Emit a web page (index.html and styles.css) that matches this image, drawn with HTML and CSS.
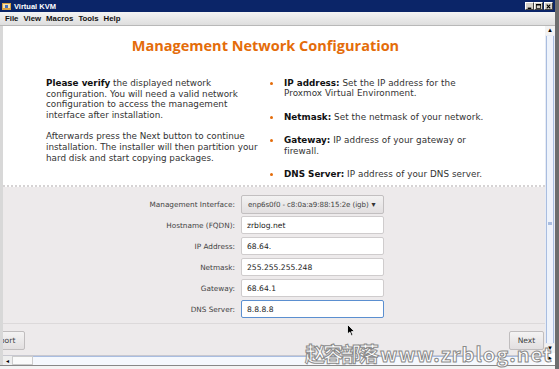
FILE: index.html
```html
<!DOCTYPE html>
<html>
<head>
<meta charset="utf-8">
<link rel="stylesheet" href="styles.css">
</head>
<body>
<div class="win">
  <div class="titlebar">
    <div class="tb-left">
      <svg class="appicon" width="9" height="9" viewBox="0 0 9 9"><rect x="0" y="1" width="9" height="7" fill="#d8a040"/><rect x="1" y="2" width="7" height="4" fill="#f4e2b0"/><rect x="3" y="3" width="3" height="3" fill="#4070c0"/></svg>
      <span class="wtitle">Virtual KVM</span>
    </div>
    <div class="tb-btns">
      <span class="tbtn"><svg width="7" height="7" viewBox="0 0 7 7"><rect x="1" y="5" width="5" height="2" fill="#000"/></svg></span>
      <span class="tbtn"><svg width="7" height="7" viewBox="0 0 7 7"><rect x="0.5" y="0.5" width="6" height="6" fill="none" stroke="#000"/><rect x="0" y="0" width="7" height="2" fill="#000"/></svg></span>
      <span class="tbtn gap"><svg width="7" height="7" viewBox="0 0 7 7"><path d="M1 1 L6 6 M6 1 L1 6" stroke="#000" stroke-width="1.6"/></svg></span>
    </div>
  </div>
  <div class="menubar">
    <span>File</span><span>View</span><span>Macros</span><span>Tools</span><span>Help</span>
  </div>
  <div class="main">
    <div class="viewport">
      <div class="page">
        <div class="top">
          <h1>Management Network Configuration</h1>
          <div class="cols">
            <div class="left">
              <p><b>Please verify</b> the displayed network<br>configuration. You will need a valid network<br>configuration to access the management<br>interface after installation.</p>
              <p>Afterwards press the Next button to continue<br>installation. The installer will then partition your<br>hard disk and start copying packages.</p>
            </div>
            <ul class="right">
              <li><b>IP address:</b> Set the IP address for the Proxmox Virtual Environment.</li>
              <li><b>Netmask:</b> Set the netmask of your network.</li>
              <li><b>Gateway:</b> IP address of your gateway or firewall.</li>
              <li><b>DNS Server:</b> IP address of your DNS server.</li>
            </ul>
          </div>
        </div>
        <div class="form">
          <div class="row"><label>Management Interface:</label><div class="combo">enp6s0f0 - c8:0a:a9:88:15:2e (igb) <span class="caret">&#9662;</span></div></div>
          <div class="row"><label>Hostname (FQDN):</label><div class="field">zrblog.net</div></div>
          <div class="row"><label>IP Address:</label><div class="field">68.64.</div></div>
          <div class="row"><label>Netmask:</label><div class="field">255.255.255.248</div></div>
          <div class="row"><label>Gateway:</label><div class="field">68.64.1</div></div>
          <div class="row"><label>DNS Server:</label><div class="field focus">8.8.8.8</div></div>
        </div>
        <div class="btnbar">
          <div class="btn abort">Abort</div>
          <div class="btn next">Next</div>
        </div>
        <svg class="cursor" width="9" height="13" viewBox="0 0 9 13"><path d="M0.5 0.5 L0.5 10 L2.8 8 L4.5 12 L6 11.3 L4.4 7.6 L7.5 7.6 Z" fill="#000" stroke="#fff" stroke-width="0.8"/></svg>
      </div>
      <div class="hscroll">
        <span class="harrow">&#9666;</span>
        <span class="hthumb"></span>
        <span class="htrack"></span>
      </div>
    </div>
    <div class="vscroll">
      <span class="varrow">&#9652;</span>
      <div class="vtrack"><span class="vgrip"></span></div>
      <span class="varrow down">&#9662;</span>
      <span class="corner">&#9656;</span>
    </div>
  </div>
  <div class="bottomedge"></div>
  <div class="watermark"><span class="wm-cjk">赵容部落</span><span class="wm-lat">www.zrblog.net</span></div>
</div>
</body>
</html>
```
FILE: styles.css
```css
* { box-sizing: border-box; }
html, body { margin: 0; padding: 0; }
body { width: 559px; height: 369px; overflow: hidden; background: #fff; font-family: "DejaVu Sans", sans-serif; }
.win { position: relative; width: 559px; height: 369px; display: flex; flex-direction: column; background: #c8c8c8; border-right: 4px solid #6d6d6d; }
.titlebar { height: 12px; background: #0b2568; display: flex; justify-content: space-between; align-items: center; padding: 0 2px 0 2px; }
.tb-left { display: flex; align-items: center; gap: 3px; }
.wtitle { color: #fff; font: bold 7.5px "Liberation Sans", sans-serif; }
.tb-btns { display: flex; gap: 0; }
.tbtn { width: 9px; height: 8px; background: #d4d0c8; border: 1px solid; border-color: #fff #404040 #404040 #fff; display: flex; align-items: center; justify-content: center; }
.tbtn svg { width: 5px; height: 5px; }
.tbtn.gap { margin-left: 1px; }
.menubar { height: 14px; background: linear-gradient(#f4f4f4, #dedede); border-bottom: 1px solid #b8b8b8; display: flex; align-items: center; gap: 5px; padding-left: 5px; font: bold 7.8px "Liberation Sans", sans-serif; color: #111; }
.main { flex: 1; display: flex; padding-left: 3px; background: #d8d8d8; min-height: 0; }
.viewport { width: 542px; display: flex; flex-direction: column; }
.page { flex: 1; position: relative; background: #edeaeb; display: flex; flex-direction: column; overflow: hidden; }
.top { background: #fff; height: 161px; border-bottom: 2px dotted #d6d3d4; }
h1 { margin: 0; padding: 12px 17px 0 0; text-align: center; color: #e46c0a; font: bold 14.5px "Open Sans", sans-serif; line-height: 16px; }
.cols { display: flex; padding-top: 24px; }
.left { width: 212px; margin-left: 43px; font-size: 8.8px; letter-spacing: 0; line-height: 10.6px; color: #333; white-space: nowrap; }
.left p { margin: 0 0 11px 0; }
.left b, .right b { color: #111; letter-spacing: 0; }
.right { margin: 0 0 0 12px; padding: 0 0 0 14px; width: 218px; font-size: 8.8px; letter-spacing: 0.05px; line-height: 10.4px; color: #333; list-style: none; }
.right li { position: relative; margin-bottom: 13px; }
.right li::before { content: ""; position: absolute; left: -14px; top: 4px; width: 3px; height: 3px; border-radius: 50%; background: #e46c0a; }
.form { padding-top: 8px; display: flex; flex-direction: column; gap: 3px; }
.row { display: flex; align-items: center; height: 18px; }
.row label { width: 238px; text-align: right; padding-right: 6px; font-size: 7.3px; color: #444; }
.combo { width: 143px; height: 19px; border: 1px solid #c2bfc0; border-radius: 2px; background: linear-gradient(#f3f2f2, #e2dfe0); font-size: 7.1px; letter-spacing: -0.1px; white-space: nowrap; color: #444; display: flex; align-items: center; padding-left: 6px; }
.caret { font-size: 8px; margin-left: 3px; color: #333; }
.field { width: 143px; height: 18px; border: 1px solid #cfcccd; border-radius: 2px; background: #fff; font-size: 7.6px; color: #222; display: flex; align-items: center; padding-left: 5px; }
.field.focus { border-color: #5b8fd0; }
.btnbar { margin-top: 5px; border-top: 1px solid #dcd9da; flex: 1; display: flex; justify-content: space-between; padding: 7px 1px 0 0; }
.btn { height: 19px; border: 1px solid #c0bdbe; border-radius: 2px; background: linear-gradient(#f4f3f3, #e2dfe0); font-size: 7.6px; color: #444; display: flex; align-items: center; justify-content: center; }
.abort { width: 40px; margin-left: -18px; }
.next { width: 35px; }
.cursor { position: absolute; left: 344px; top: 298px; }
.watermark { position: absolute; left: 305px; top: 339px; line-height: 1; font: bold 20px "Noto Sans CJK SC", "DejaVu Sans", sans-serif; color: #fff; -webkit-text-stroke: 1px #8a8a8a; white-space: nowrap; }
.wm-cjk { letter-spacing: -2px; }
.wm-lat { letter-spacing: 1px; margin-left: 3px; }
.hscroll { height: 10px; display: flex; align-items: stretch; background: #f3f3f6; border-top: 1px solid #c8c8d0; }
.harrow { width: 9px; font-size: 6px; line-height: 9px; text-align: center; color: #000; background: #eee; }
.hthumb { width: 21px; background: #fafafa; border: 1px solid #ccc; }
.htrack { flex: 1; background: #f5f8fd; border-top: 1px solid #a9bde0; }
.vscroll { width: 10px; display: flex; flex-direction: column; background: #e8ecf4; position: relative; }
.varrow { height: 9px; font-size: 7px; line-height: 9px; text-align: center; background: #f2f2f2; color: #000; }
.vtrack { flex: 1; margin: 1px 1px; background: #eef3fb; border-left: 1px solid #a9bde0; border-right: 1px solid #a9bde0; position: relative; }
.vgrip { position: absolute; left: 1px; right: 1px; top: 186px; height: 3px; background: #a9bde0; }
.varrow.down { height: 9px; }
.corner { height: 12px; font-size: 7px; line-height: 10px; text-align: center; background: #fff; }
.bottomedge { height: 4px; background: #f4f4f4; border-top: 1px solid #888; }
```
